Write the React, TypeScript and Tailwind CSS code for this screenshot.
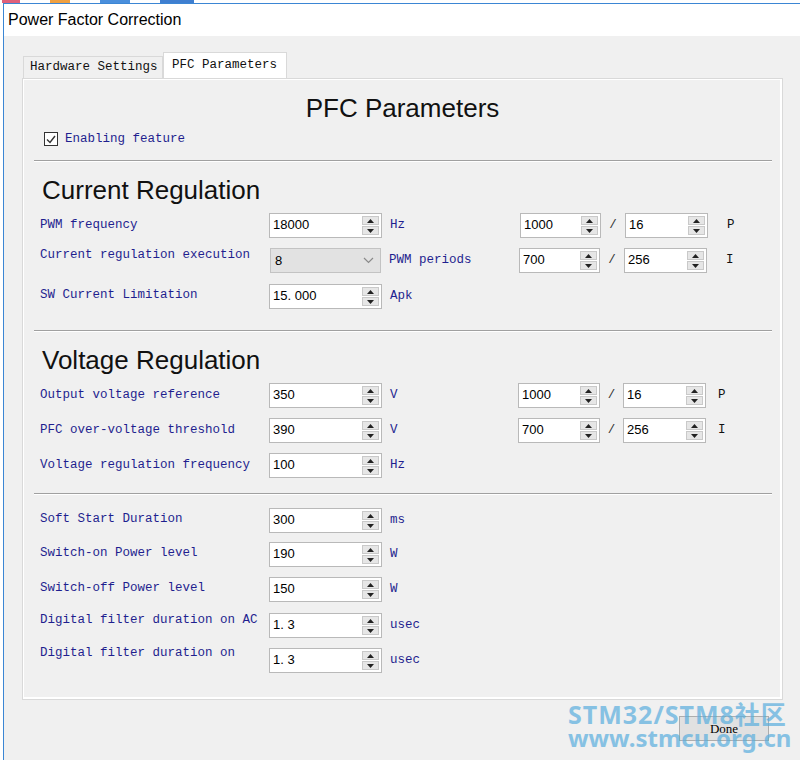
import React from 'react';

const LABEL = "font-['Liberation_Mono','DejaVu_Sans_Mono',monospace] text-[12.5px] text-[#1f1f8f] whitespace-pre";
const NUM = "font-['Liberation_Sans',Arial,sans-serif] text-[13px] text-black";

function Arrow({ up }: { up?: boolean }) {
  return (
    <svg width="7" height="4" viewBox="0 0 7 4">
      <path d={up ? 'M0 4 L3.5 0 L7 4 Z' : 'M0 0 L7 0 L3.5 4 Z'} fill="#222" />
    </svg>
  );
}

function SpinBox({ value, width }: { value: string; width: string }) {
  return (
    <div className={`flex h-[25px] shrink-0 items-stretch border border-[#b9b9b9] bg-white ${width}`}>
      <span className={`flex-1 pl-[3px] leading-[21px] ${NUM}`}>{value}</span>
      <div className="my-[2px] mr-[2px] flex w-[17px] flex-col gap-[1px]">
        <div className="flex flex-1 items-center justify-center border border-[#c9c9c9] bg-[#e6e6e6]">
          <Arrow up />
        </div>
        <div className="flex flex-1 items-center justify-center border border-[#c9c9c9] bg-[#e6e6e6]">
          <Arrow />
        </div>
      </div>
    </div>
  );
}

function Combo({ value }: { value: string }) {
  return (
    <div className="ml-[1px] flex h-[25px] w-[111px] shrink-0 items-center justify-between border border-[#c3c3c3] bg-[#e2e2e2] pl-[4px] pr-[6px]">
      <span className={`${NUM} text-[#333]`}>{value}</span>
      <svg width="11" height="7" viewBox="0 0 11 7">
        <path d="M1 1 L5.5 5.5 L10 1" fill="none" stroke="#8a8a8a" strokeWidth="1.2" />
      </svg>
    </div>
  );
}

function Separator({ className }: { className: string }) {
  return (
    <div className={`ml-[11px] mr-[10px] flex flex-col ${className}`}>
      <div className="h-[1px] bg-[#a0a0a0]" />
      <div className="h-[1px] bg-white" />
    </div>
  );
}

function Heading({ text, className }: { text: string; className: string }) {
  return (
    <div className={`h-[30px] pl-[19px] font-['Liberation_Sans',Arial,sans-serif] text-[26px] leading-[30px] text-[#111] ${className}`}>
      {text}
    </div>
  );
}

type Pair = { a: string; b: string; tag: string };

function Row({
  label,
  labelPad = '',
  field,
  unit,
  unitWidth = 'w-[130px]',
  pair,
  voltage,
  className,
}: {
  label: string;
  labelPad?: string;
  field: React.ReactNode;
  unit: string;
  unitWidth?: string;
  pair?: Pair;
  voltage?: boolean;
  className: string;
}) {
  return (
    <div className={`flex h-[25px] items-center pl-[17px] ${className}`}>
      <div className={`w-[229px] shrink-0 ${labelPad} ${LABEL}`}>{label}</div>
      {field}
      <div className={`ml-[8px] shrink-0 ${unitWidth} ${LABEL}`}>{unit}</div>
      {pair && (
        <div className="flex items-center">
          <SpinBox value={pair.a} width={voltage ? 'w-[82px]' : 'w-[81px]'} />
          <span className={`shrink-0 text-center ${voltage ? 'w-[23px]' : 'w-[24px]'} ${LABEL} text-[#333]`}>/</span>
          <SpinBox value={pair.b} width="w-[83px]" />
          <span className={`${voltage ? 'ml-[12px]' : 'ml-[19px]'} ${LABEL} text-[#111]`}>{pair.tag}</span>
        </div>
      )}
    </div>
  );
}

export default function App() {
  return (
    <div className="relative h-[760px] w-[800px] overflow-hidden bg-white">
      {/* desktop icons peeking above the window */}
      <div className="flex h-[3px] gap-[30px] pl-[2px]">
        <span className="w-[18px] bg-[#e0607a]" />
        <span className="w-[20px] bg-[#f0a040]" />
        <span className="w-[30px] bg-[#4a8fdc]" />
        <span className="w-[34px] bg-[#3f7fd0]" />
      </div>

      <div className="ml-[3px] flex h-[757px] flex-col border-l border-t border-[#3b86d4]">
        <div className="flex h-[32px] items-center pl-[4px] font-['Liberation_Sans',Arial,sans-serif] text-[16px] text-black">
          Power Factor Correction
        </div>

        <div className="flex flex-1 flex-col bg-[#f0f0f0] pt-[16px]">
          {/* tab strip */}
          <div className="flex items-end pl-[19px]">
            <div className={`flex h-[22px] w-[140px] items-center border border-b-0 border-[#d9d9d9] bg-[#f0f0f0] pl-[6px] ${LABEL} text-[#111]`}>
              Hardware Settings
            </div>
            <div className={`flex h-[26px] w-[124px] items-center border border-b-0 border-[#d9d9d9] bg-white pl-[8px] ${LABEL} text-[#111]`}>
              PFC Parameters
            </div>
          </div>

          {/* tab page */}
          <div className="ml-[18px] flex h-[622px] w-[761px] flex-col border border-[#d9d9d9] bg-[#f0f0f0] shadow-[inset_1px_1px_0_#ffffff,inset_-2px_-2px_0_#ffffff]">
            <div className="mt-[14px] h-[30px] text-center font-['Liberation_Sans',Arial,sans-serif] text-[26px] leading-[30px] text-[#111]">
              PFC Parameters
            </div>

            <div className="mt-[8px] flex h-[16px] items-center pl-[21px]">
              <div className="flex h-[14px] w-[14px] items-center justify-center border border-[#333] bg-white">
                <svg width="10" height="9" viewBox="0 0 10 9">
                  <path d="M1 4.5 L4 7.5 L9 1" fill="none" stroke="#333" strokeWidth="1.4" />
                </svg>
              </div>
              <span className={`ml-[7px] ${LABEL}`}>Enabling feature</span>
            </div>

            <Separator className="mt-[13px]" />

            <Heading text="Current Regulation" className="mt-[13px]" />
            <Row
              className="mt-[8px]"
              label="PWM frequency"
              field={<SpinBox value="18000" width="w-[113px]" />}
              unit="Hz"
              pair={{ a: '1000', b: '16', tag: 'P' }}
            />
            <Row
              className="mt-[10px]"
              label="Current regulation execution"
              labelPad="pb-[10px]"
              field={<Combo value="8" />}
              unit="PWM periods"
              pair={{ a: '700', b: '256', tag: 'I' }}
            />
            <Row
              className="mt-[11px]"
              label="SW Current Limitation"
              labelPad="pb-[2px]"
              field={<SpinBox value="15. 000" width="w-[113px]" />}
              unit="Apk"
            />

            <Separator className="mt-[21px]" />

            <Heading text="Voltage Regulation" className="mt-[13px]" />
            <Row
              className="mt-[8px]"
              label="Output voltage reference"
              field={<SpinBox value="350" width="w-[113px]" />}
              unit="V"
              unitWidth="w-[128px]"
              voltage
              pair={{ a: '1000', b: '16', tag: 'P' }}
            />
            <Row
              className="mt-[10px]"
              label="PFC over-voltage threshold"
              field={<SpinBox value="390" width="w-[113px]" />}
              unit="V"
              unitWidth="w-[128px]"
              voltage
              pair={{ a: '700', b: '256', tag: 'I' }}
            />
            <Row
              className="mt-[10px]"
              label="Voltage regulation frequency"
              field={<SpinBox value="100" width="w-[113px]" />}
              unit="Hz"
            />

            <Separator className="mt-[15px]" />

            <Row
              className="mt-[13px]"
              label="Soft Start Duration"
              labelPad="pb-[2px]"
              field={<SpinBox value="300" width="w-[113px]" />}
              unit="ms"
            />
            <Row
              className="mt-[9px]"
              label="Switch-on Power level"
              labelPad="pb-[2px]"
              field={<SpinBox value="190" width="w-[113px]" />}
              unit="W"
            />
            <Row
              className="mt-[10px]"
              label="Switch-off Power level"
              labelPad="pb-[2px]"
              field={<SpinBox value="150" width="w-[113px]" />}
              unit="W"
            />
            <Row
              className="mt-[11px]"
              label="Digital filter duration on AC"
              labelPad="pb-[10px]"
              field={<SpinBox value="1. 3" width="w-[113px]" />}
              unit="usec"
            />
            <Row
              className="mt-[10px]"
              label="Digital filter duration on"
              labelPad="pb-[14px]"
              field={<SpinBox value="1. 3" width="w-[113px]" />}
              unit="usec"
            />
          </div>

          <div className="mt-[16px] flex justify-end pr-[31px]">
            <button className="flex h-[25px] w-[90px] items-center justify-center border border-[#adadad] bg-[#e1e1e1] font-['Liberation_Serif',serif] text-[13px] text-black">
              Done
            </button>
          </div>
        </div>
      </div>

      {/* forum watermark stamped over the corner */}
      <div className="pointer-events-none absolute left-[568px] top-[703px] flex flex-col font-['Noto_Sans','Noto_Sans_CJK_SC',sans-serif] font-bold leading-[23px] text-[#5aaede] opacity-70">
        <span className="text-[25px] tracking-[1px]">STM32/STM8社区</span>
        <span className="text-[24px]">www.stmcu.org.cn</span>
      </div>
    </div>
  );
}
